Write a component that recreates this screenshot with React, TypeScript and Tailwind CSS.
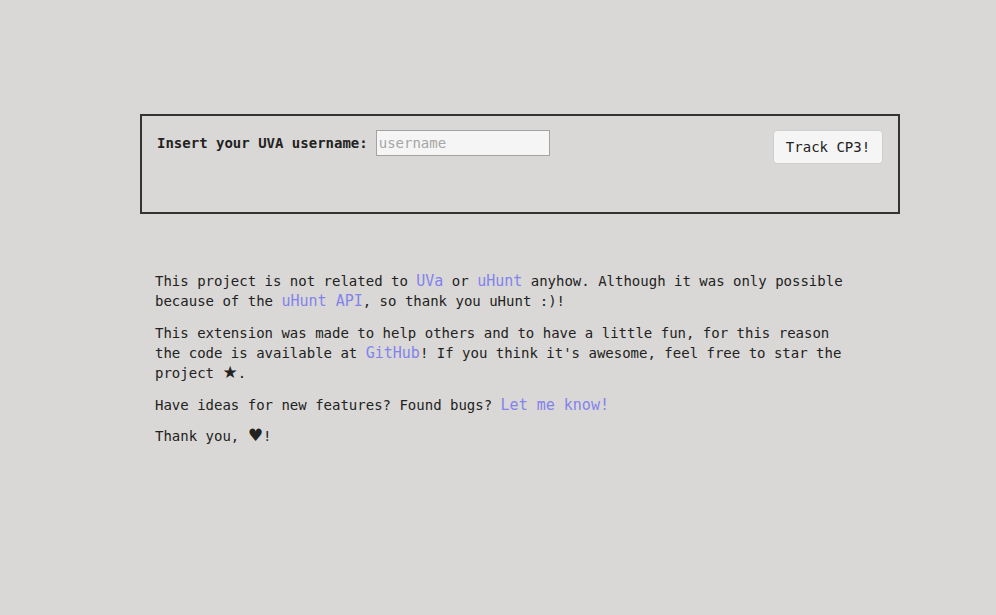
import { useState } from 'react'

const mono = "font-['DejaVu_Sans_Mono',monospace]"
const link = "text-[15px] text-[#8383ec] no-underline hover:underline"
const glyph = "font-['DejaVu_Sans',sans-serif] text-[17px] leading-[0]"

export default function App() {
    const [username, setUsername] = useState<string>('')

    return (
        <div className={`min-h-[615px] bg-[#d9d8d6] text-[#222] ${mono} pt-[114px] pl-[140px]`}>
            <div className="w-[760px] h-[100px] border-2 border-[#333] px-[15px] pt-[14px] flex justify-between items-start">
                <div className="flex items-center gap-2">
                    <label htmlFor="username" className="text-sm font-bold">
                        Insert your UVA username:
                    </label>
                    <input
                        id="username"
                        value={username}
                        onChange={(e) => setUsername(e.target.value)}
                        placeholder="username"
                        className="w-[174px] h-[26px] px-[2px] bg-[#f5f5f5] border border-[#a3a3a3] text-sm placeholder:text-[#a6a6a6] outline-none"
                    />
                </div>
                <button className="w-[110px] h-[34px] bg-[#f5f5f5] border border-[#cfcfcf] rounded-[4px] text-sm text-[#222]">
                    Track CP3!
                </button>
            </div>

            <div className="w-[700px] ml-[15px] mt-[57px] text-sm leading-[20px] flex flex-col gap-[12px]">
                <p>
                    This project is not related to <a href="#" className={link}>UVa</a> or{' '}
                    <a href="#" className={link}>uHunt</a> anyhow. Although it was only possible because of the{' '}
                    <a href="#" className={link}>uHunt API</a>, so thank you uHunt :)!
                </p>
                <p>
                    This extension was made to help others and to have a little fun, for this reason the code is
                    available at <a href="#" className={link}>GitHub</a>! If you think it's awesome, feel free to star
                    the project <span className={glyph}>★</span>.
                </p>
                <p>
                    Have ideas for new features? Found bugs? <a href="#" className={link}>Let me know!</a>
                </p>
                <p className="mt-[-1px]">
                    Thank you, <span className={glyph}>♥</span>!
                </p>
            </div>
        </div>
    )
}
